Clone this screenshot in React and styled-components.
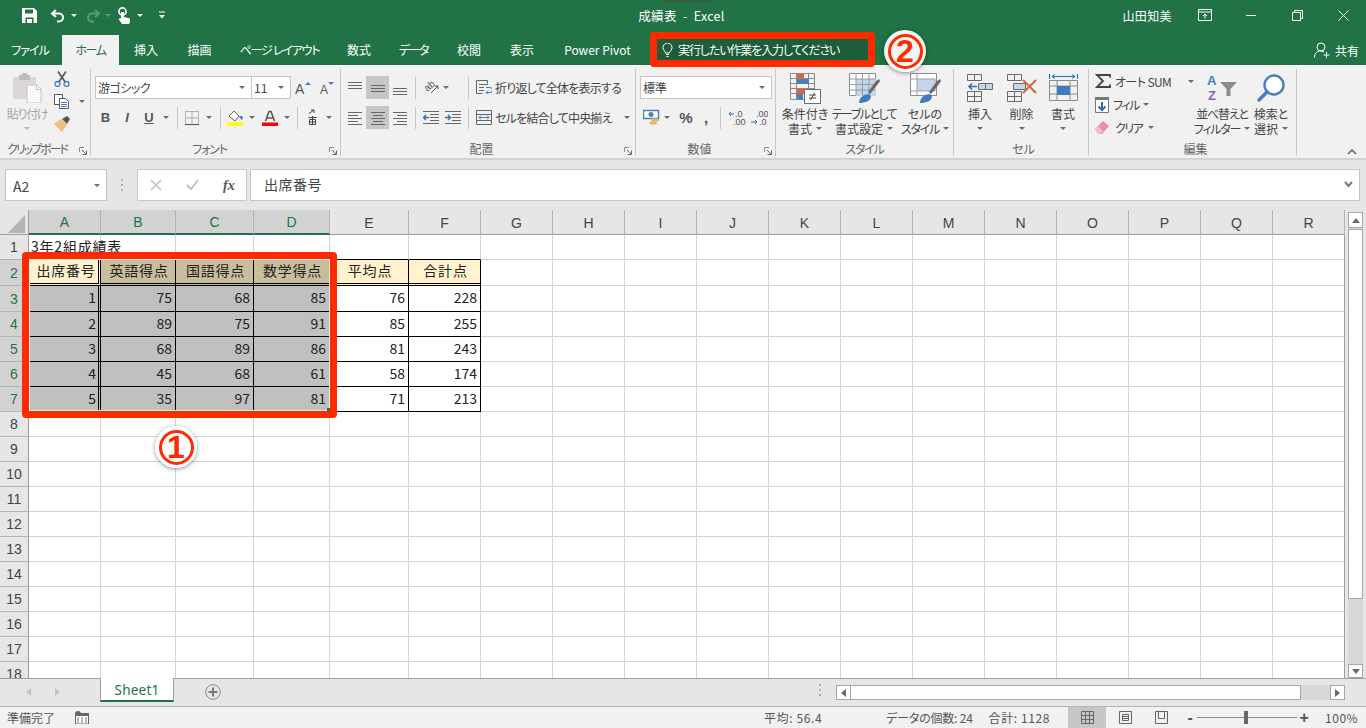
import React from "react";
import styled, { createGlobalStyle } from "styled-components";

const GREEN = "#217346";
const JP = `"Noto Sans CJK JP", "Noto Sans", sans-serif`;

const GlobalStyle = createGlobalStyle`
  html, body { margin: 0; padding: 0; overflow: hidden; background: #fff; }
  * { box-sizing: border-box; }
  body { font-family: ${JP}; font-size: 12px; font-feature-settings: "palt"; }
`;

const Window = styled.div`
  position: relative;
  width: 1366px;
  height: 728px;
  display: flex;
  flex-direction: column;
  overflow: hidden;
  background: #e6e6e6;
`;

/* kana in the original font runs much narrower than Noto */
const Kana = styled.span`
  letter-spacing: ${(p) => p.$ls ?? -1}px;
`;

/* ---------- title bar ---------- */
const TitleBar = styled.div`
  height: 35px;
  padding-bottom: 5px;
  display: grid;
  grid-template-columns: 1fr auto 1fr;
  align-items: center;
  background: ${GREEN};
  color: #fff;
`;
const Qat = styled.div`
  display: flex;
  align-items: center;
  padding-left: 19px;
`;
const QatCell = styled.span`
  display: flex;
  align-items: center;
  justify-content: center;
  width: ${(p) => p.$w}px;
  margin-left: ${(p) => p.$ml || 0}px;
  height: 24px;
`;
const DocTitle = styled.div`
  font-size: 12.5px;
  letter-spacing: 0.3px;
  white-space: pre;
  margin-left: -3px;
`;
const WinArea = styled.div`
  display: flex;
  align-items: center;
  justify-content: flex-end;
`;
const UserName = styled.span`
  font-size: 12px;
  letter-spacing: 0.4px;
  margin-right: 10px;
`;
const WinBtn = styled.span`
  display: flex;
  align-items: center;
  justify-content: center;
  width: 46px;
  height: 24px;
`;

/* ---------- tabs ---------- */
const TabRow = styled.div`
  height: 30px;
  display: flex;
  background: ${GREEN};
`;
const Tab = styled.div`
  width: ${(p) => p.$w}px;
  margin-left: ${(p) => p.$ml || 0}px;
  padding-bottom: 2px;
  display: flex;
  align-items: center;
  justify-content: center;
  font-size: 12px;
  color: ${(p) => (p.$active ? GREEN : "#fff")};
  background: ${(p) => (p.$active ? "#f1f1f1" : "transparent")};
  white-space: pre;
`;
const TellMe = styled.div`
  width: 211px;
  height: 21px;
  margin: 4px 0 0 10px;
  display: flex;
  align-items: center;
  gap: 5px;
  padding-left: 5px;
  background: #1d5e3a;
  color: #fff;
  font-size: 12px;
`;
const Share = styled.div`
  margin-left: auto;
  padding-right: 7px;
  display: flex;
  align-items: center;
  gap: 5px;
  color: #fff;
  font-size: 12px;
`;

/* ---------- ribbon ---------- */
const Ribbon = styled.div`
  position: relative;
  height: 95px;
  display: flex;
  align-items: flex-start;
  background: #f1f1f1;
  border-bottom: 2px solid #d2d2d2;
`;
const Group = styled.div`
  position: relative;
  width: ${(p) => p.$w}px;
  height: 87px;
  margin-top: 4px;
  padding-left: ${(p) => p.$pl || 0}px;
  border-right: 1px solid #c8c8c8;
  flex: none;
`;
const GroupBody = styled.div`
  height: 72px;
  display: flex;
`;
const Stack = styled.div`
  width: ${(p) => (p.$w ? `${p.$w}px` : "auto")};
  padding-top: ${(p) => p.$pt ?? 7}px;
  display: flex;
  flex-direction: column;
  gap: ${(p) => p.$gap ?? 7}px;
`;
const Row = styled.div`
  height: ${(p) => p.$h || 23}px;
  display: flex;
  align-items: center;
`;
const Cell = styled.span`
  flex: none;
  display: flex;
  align-items: center;
  justify-content: center;
  width: ${(p) => p.$w}px;
  height: 23px;
  background: ${(p) => (p.$active ? "#c6c6c6" : "transparent")};
`;
const VSep = styled.i`
  display: block;
  width: 1px;
  height: 22px;
  background: #c8c8c8;
`;
const Caret = styled.i`
  display: block;
  flex: none;
  width: 0;
  height: 0;
  border-left: 3px solid transparent;
  border-right: 3px solid transparent;
  border-top: 3px solid ${(p) => p.$c || "#6a6a6a"};
`;
const GroupLabel = styled.div`
  height: 15px;
  line-height: 15px;
  text-align: center;
  color: #666;
  font-size: 12px;
  padding-right: ${(p) => (p.$launch ? 16 : 0)}px;
`;
const Launcher = styled.span`
  position: absolute;
  right: 3px;
  bottom: 1px;
  display: flex;
`;
const Chevron = styled.span`
  position: absolute;
  right: 9px;
  bottom: 3px;
  display: flex;
`;
const Select = styled.div`
  width: ${(p) => p.$w}px;
  height: 23px;
  flex: none;
  display: flex;
  align-items: center;
  justify-content: space-between;
  padding: 0 6px 0 2px;
  background: #fff;
  border: 1px solid #c6c6c6;
  color: #444;
  font-size: 12px;
  margin-left: ${(p) => p.$ml || 0}px;
`;
const BigBtn = styled.div`
  width: ${(p) => p.$w}px;
  flex: none;
  display: flex;
  flex-direction: column;
  align-items: center;
  padding-top: 3px;
  color: ${(p) => (p.$off ? "#a6a6a6" : "#444")};
  font-size: 12px;
  line-height: 15px;
  white-space: pre;
`;
const BigIcon = styled.span`
  height: 32px;
  display: flex;
  align-items: center;
  justify-content: center;
  margin-bottom: 2px;
`;
const BigLine = styled.span`
  display: flex;
  align-items: center;
  gap: 4px;
  height: 15px;
`;
const SmallBtn = styled.div`
  display: flex;
  align-items: center;
  gap: ${(p) => p.$gap ?? 4}px;
  color: #444;
  font-size: 12px;
  white-space: pre;
`;
const Spacer = styled.i`
  display: block;
  flex: none;
  width: ${(p) => p.$w}px;
`;
const Filler = styled.i`
  display: block;
  flex: 1;
`;
const FmtLetter = styled.span`
  font-family: "Liberation Sans", sans-serif;
  font-size: 13px;
  font-weight: 700;
  font-style: ${(p) => (p.$i ? "italic" : "normal")};
  text-decoration: ${(p) => (p.$u ? "underline" : "none")};
  color: #555;
`;
const Percent = styled.span`
  font-family: "Liberation Sans", sans-serif;
  font-size: 15px;
  font-weight: 700;
  color: #555;
`;

/* ---------- formula bar ---------- */
const FormulaBar = styled.div`
  height: 50px;
  padding: 9px 6px 9px 5px;
  display: flex;
  align-items: stretch;
  background: #e6e6e6;
`;
const NameBox = styled.div`
  width: 102px;
  display: flex;
  align-items: center;
  justify-content: space-between;
  padding: 1px 6px 0 7px;
  background: #fff;
  border: 1px solid #c6c6c6;
  font-size: 14px;
  color: #444;
`;
const Grip = styled.span`
  width: 30px;
  display: flex;
  align-items: center;
  justify-content: center;
`;
const FxBox = styled.div`
  width: 110px;
  display: flex;
  align-items: center;
  padding-left: 12px;
  gap: 24px;
  background: #fff;
  border: 1px solid #c6c6c6;
`;
const FormulaInput = styled.div`
  flex: 1;
  margin-left: 3px;
  padding: 0 6px 2px 13px;
  display: flex;
  align-items: center;
  justify-content: space-between;
  background: #fff;
  border: 1px solid #c6c6c6;
  font-size: 14px;
  color: #444;
  letter-spacing: 0.5px;
`;

/* ---------- sheet ---------- */
const SheetArea = styled.div`
  height: 468px;
  display: flex;
  background: #fff;
`;
const GridClip = styled.div`
  width: 1345px;
  overflow: hidden;
`;
const Table = styled.table`
  width: 1345px;
  table-layout: fixed;
  border-collapse: separate;
  border-spacing: 0;
`;
const Tr = styled.tr`
  height: ${(p) => p.$h}px;
`;
const ColHead = styled.th`
  padding: 1px 0 0;
  font-weight: 400;
  font-size: 14px;
  font-family: "Liberation Sans", sans-serif;
  color: ${(p) => (p.$sel ? GREEN : "#444")};
  background: ${(p) => (p.$sel ? "#d2d2d2" : "#e6e6e6")};
  border-right: 1px solid #b4b4b4;
  border-bottom: ${(p) => (p.$sel ? `2px solid ${GREEN}` : "1px solid #9e9e9e")};
`;
const Corner = styled.th`
  padding: 0;
  background: #e6e6e6;
  border-right: 1px solid #9e9e9e;
  border-bottom: 1px solid #9e9e9e;
  vertical-align: bottom;
`;
const RowHead = styled.th`
  padding: 0;
  font-weight: 400;
  font-size: 14px;
  line-height: 16px;
  font-family: "Liberation Sans", sans-serif;
  color: ${(p) => (p.$sel ? GREEN : "#444")};
  background: ${(p) => (p.$sel ? "#d2d2d2" : "#e6e6e6")};
  border-right: 1px solid #9e9e9e;
  border-bottom: 1px solid #b4b4b4;
`;
const Td = styled.td`
  padding: 0 ${(p) => p.$pr ?? 3}px 3px ${(p) => p.$pl ?? 2}px;
  font-size: 14px;
  line-height: 18px;
  color: #222;
  white-space: nowrap;
  overflow: visible;
  text-align: ${(p) => p.$align || "right"};
  letter-spacing: ${(p) => (p.$head ? "0.8px" : "0")};
  background: ${(p) => p.$bg || "#fff"};
  border-right: ${(p) => p.$right || "1px solid #d4d4d4"};
  border-bottom: ${(p) => p.$bottom || "1px solid #d4d4d4"};
`;
const TitleText = styled.span`
  display: block;
  width: 0;
  text-align: left;
  letter-spacing: 0.8px;
`;
const VTrack = styled.div`
  flex: 1;
  background: #d8d8d8;
  display: flex;
  flex-direction: column;
`;
const ScrollBtn = styled.div`
  flex: none;
  width: ${(p) => p.$w || 15}px;
  height: ${(p) => p.$h || 15}px;
  display: flex;
  align-items: center;
  justify-content: center;
  background: #fff;
  border: 1px solid #a6a6a6;
`;
const VScrollWrap = styled.div`
  width: 21px;
  display: flex;
  flex-direction: column;
  background: #e6e6e6;
  padding: 2px 3px 0 3px;
`;
const VThumb = styled.div`
  height: 370px;
  margin-top: 1px;
  background: #fff;
  border: 1px solid #a6a6a6;
`;
const TriH = styled.i`
  display: block;
  width: 0;
  height: 0;
  border-top: 4px solid transparent;
  border-bottom: 4px solid transparent;
  ${(p) => (p.$dir === "left" ? "border-right" : "border-left")}: 5px solid ${(p) => p.$c || "#6a6a6a"};
`;
const TriV = styled.i`
  display: block;
  width: 0;
  height: 0;
  border-left: 4px solid transparent;
  border-right: 4px solid transparent;
  ${(p) => (p.$dir === "up" ? "border-bottom" : "border-top")}: 5px solid #6a6a6a;
`;

/* ---------- sheet tabs ---------- */
const TabBar = styled.div`
  height: 29px;
  display: flex;
  align-items: flex-start;
  background: #e6e6e6;
  border-top: 1px solid #9e9e9e;
  border-bottom: 1px solid #b4b4b4;
`;
const SheetNav = styled.div`
  width: 100px;
  height: 25px;
  display: flex;
  align-items: center;
  padding-left: 26px;
  gap: 24px;
`;
const SheetTab = styled.div`
  width: 74px;
  height: 24px;
  margin-top: -1px;
  padding-top: 2px;
  display: flex;
  align-items: center;
  justify-content: center;
  background: #fff;
  color: ${GREEN};
  font-size: 13.5px;
  letter-spacing: 0.2px;
  font-family: "Noto Sans", sans-serif;
  border-left: 1px solid #9e9e9e;
  border-right: 1px solid #9e9e9e;
  border-bottom: 2px solid ${GREEN};
`;
const AddSheet = styled.span`
  margin: 5px 0 0 31px;
  display: flex;
`;
const TabGrip = styled.span`
  margin: 5px 0 0 591px;
  width: 16px;
  display: flex;
  justify-content: center;
`;
const HScroll = styled.div`
  width: 509px;
  height: 15px;
  margin: 6px 0 0 8px;
  display: flex;
  background: #d8d8d8;
`;
const HThumb = styled.div`
  flex: none;
  width: 450px;
  background: #fff;
  border: 1px solid #a6a6a6;
  border-left: none;
`;

/* ---------- status bar ---------- */
const StatusBar = styled.div`
  height: 21px;
  display: flex;
  align-items: center;
  background: #f1f1f1;
  color: #555;
  font-size: 12px;
`;
const StatusText = styled.span`
  white-space: pre;
  letter-spacing: ${(p) => p.$ls || 0}px;
  margin-left: ${(p) => p.$ml}px;
`;
const StatusIcon = styled.span`
  display: flex;
  margin-left: ${(p) => p.$ml}px;
`;
const ViewBtn = styled.span`
  width: ${(p) => p.$w}px;
  height: 21px;
  display: flex;
  align-items: center;
  justify-content: center;
  background: ${(p) => (p.$active ? "#c6c6c6" : "transparent")};
`;
const ZoomTrack = styled.div`
  position: relative;
  width: 100px;
  height: 1px;
  margin: 0 1px;
  background: #8a8a8a;
`;
const ZoomThumb = styled.i`
  position: absolute;
  left: 47px;
  top: -6px;
  width: 4px;
  height: 13px;
  background: #666;
`;
const ZoomSign = styled.span`
  width: 12px;
  margin-left: ${(p) => p.$ml || 0}px;
  text-align: center;
  font-size: 16px;
  font-weight: 700;
  color: #555;
  font-family: "Liberation Sans", sans-serif;
`;

/* ---------- annotations over the screenshot ---------- */
const RedBox = styled.div`
  position: absolute;
  left: ${(p) => p.$x}px;
  top: ${(p) => p.$y}px;
  width: ${(p) => p.$w}px;
  height: ${(p) => p.$h}px;
  border: 7px solid #ff2a00;
  border-radius: 4px;
`;
const SelectionEdge = styled.i`
  position: absolute;
  inset: 0;
  border: 1px solid #e8efe9;
  &::after {
    content: "";
    position: absolute;
    right: -1px;
    bottom: -1px;
    width: 3px;
    height: 3px;
    background: ${GREEN};
  }
`;
const Badge = styled.div`
  position: absolute;
  left: ${(p) => p.$x}px;
  top: ${(p) => p.$y}px;
  width: 42px;
  height: 42px;
  display: flex;
  align-items: center;
  justify-content: center;
  border-radius: 50%;
  background: rgba(255, 255, 255, 0.94);
  box-shadow: 0 1px 4px rgba(0, 0, 0, 0.45);
`;
const BadgeRing = styled.span`
  width: 35px;
  height: 35px;
  display: flex;
  align-items: center;
  justify-content: center;
  border-radius: 50%;
  border: 3px solid #ff2a00;
  color: #ff2a00;
  font-family: "Liberation Sans", sans-serif;
  font-size: 32px;
  font-weight: 700;
  line-height: 1;
`;
const TopNotch = styled.i`
  position: absolute;
  left: 663px;
  top: 0;
  width: 47px;
  height: 2px;
  background: #3a5a48;
`;

/* ---------- icons ---------- */
const IcoSvg = styled.svg`
  display: block;
  flex: none;
`;
const Ico = ({ w = 16, h = 16, children }) => (
  <IcoSvg width={w} height={h} viewBox={`0 0 ${w} ${h}`} fill="none">
    {children}
  </IcoSvg>
);
const CornerSvg = styled.svg`
  display: block;
  margin: 0 3px 1px auto;
`;

const SaveIcon = () => (
  <Ico w={15} h={15}>
    <path d="M0 0h12l3 3v12H0z" fill="#fff" />
    <path d="M3 1.500h8v4H3z" fill={GREEN} />
    <path d="M3.500 9.500h8V15h-8z" fill={GREEN} />
    <path d="M5 11h5v4H5z" fill="#fff" />
  </Ico>
);
const UndoIcon = ({ c = "#fff", flip }) => (
  <Ico w={15} h={15}>
    <g transform={flip ? "translate(15 0) scale(-1 1)" : undefined} stroke={c} strokeWidth="2">
      <path d="M6 2 2 5.500 6 9" />
      <path d="M2.500 5.500H9a3.800 3.800 0 0 1 0 8H7" />
    </g>
  </Ico>
);
const TouchIcon = () => (
  <Ico w={15} h={17}>
    <circle cx="5.500" cy="4.500" r="3.600" stroke="#fff" strokeWidth="1.600" />
    <path d="M4 5h3v5l6 1.500V15l-1 2H5L1.500 12 4 11z" fill="#fff" />
  </Ico>
);
const CustomizeIcon = () => (
  <Ico w={8} h={8}>
    <path d="M1 1h6" stroke="#fff" />
    <path d="M1 4h6L4 7.500z" fill="#fff" />
  </Ico>
);
const RibbonModeIcon = () => (
  <Ico w={14} h={12}>
    <path d="M.5.5h13v11H.5zM.5 3h13" stroke="#fff" />
    <path d="M7 9.500V5M5 7l2-2 2 2" stroke="#fff" />
  </Ico>
);
const MinIcon = () => (
  <Ico w={10} h={10}>
    <path d="M0 5.500h10" stroke="#fff" />
  </Ico>
);
const RestoreIcon = () => (
  <Ico w={11} h={11}>
    <path d="M.5 2.500h8v8h-8zM2.500 2.500v-2h8v8h-2" stroke="#fff" />
  </Ico>
);
const CloseIcon = () => (
  <Ico w={11} h={11}>
    <path d="M.5.5l10 10M10.500.5l-10 10" stroke="#fff" />
  </Ico>
);
const BulbIcon = () => (
  <Ico w={11} h={14}>
    <path d="M3.500 10C3 7.500 1 7 1 4.600a4.500 4.500 0 0 1 9 0C10 7 8 7.500 7.500 10z" stroke="#fff" />
    <path d="M4 11.500h3M4.500 13.500h2" stroke="#fff" />
  </Ico>
);
const ShareIcon = () => (
  <Ico w={16} h={16}>
    <circle cx="7" cy="5" r="4" stroke="#fff" />
    <path d="M.5 15.500c0-4 2.500-6.500 6-6.500 1.500 0 2.500.5 3.500 1" stroke="#fff" />
    <path d="M9.500 13h6M12.500 10v6" stroke="#fff" />
  </Ico>
);

const PasteIcon = () => (
  <Ico w={30} h={30}>
    <path d="M1 4h23v22H1z" fill="#dbd7d7" />
    <path d="M7 2h11v5H7zM10 0h5v3h-5z" fill="#bfbcbc" />
    <path d="M15 12h10l4 4v14H15z" fill="#f8f8f8" stroke="#c4c4c4" />
    <path d="M24.500 12v4.500H29" stroke="#c4c4c4" />
  </Ico>
);
const ScissorsIcon = () => (
  <Ico w={16} h={16}>
    <path d="M4 .5l7.500 11M12 .5 4.500 11.500" stroke="#555" strokeWidth="1.600" />
    <circle cx="3.500" cy="13" r="2.500" stroke="#4a7ebb" strokeWidth="1.300" />
    <circle cx="12.500" cy="13" r="2.500" stroke="#4a7ebb" strokeWidth="1.300" />
  </Ico>
);
const CopyIcon = () => (
  <Ico w={16} h={15}>
    <path d="M.5.5h8v10h-8z" fill="#fff" stroke="#555" />
    <path d="M5.500 4.500h6l3 3v7h-9z" fill="#fff" stroke="#555" />
    <path d="M7 8.500h6M7 10.500h6M7 12.500h6" stroke="#4a7ebb" />
  </Ico>
);
const PainterIcon = () => (
  <Ico w={17} h={16}>
    <path d="M0 8l7-5 6 6-5 7z" fill="#efbf7f" />
    <path d="M8 3l5-3 3 3-3 5z" fill="#555" />
  </Ico>
);
const Launch = () => (
  <Launcher>
    <Ico w={8} h={8}>
      <path d="M.5 5V.5H5" stroke="#8a8a8a" />
      <path d="M3 3l4 4M7.500 3.500v4h-4" stroke="#666" />
    </Ico>
  </Launcher>
);
const GrowIcon = ({ up }) => (
  <Ico w={16} h={18}>
    <text x={up ? 0 : 2} y="15" fontFamily="Liberation Sans" fontSize={up ? 14 : 12} fill="#555">A</text>
    <path d={up ? "M10 6l3-3 3 3z" : "M10 3h6l-3 3z"} fill="#4a7ebb" />
  </Ico>
);
const BorderIcon = () => (
  <Ico w={14} h={14}>
    <path d="M.5.5h13v13H.5zM7 .5v13M.5 7h13" stroke="#777" strokeDasharray="1 1" />
    <path d="M0 13.500h14" stroke="#555" />
  </Ico>
);
const FillIcon = () => (
  <Ico w={17} h={16}>
    <path d="M2 6l5-5 5 5-4 5z" fill="#fff" stroke="#666" />
    <path d="M12 6h3l1 2-1 2-2-2z" fill="#4a7ebb" />
    <path d="M0 12.500h16V16H0z" fill="#ffff00" />
  </Ico>
);
const FontColorIcon = () => (
  <Ico w={16} h={16}>
    <path d="M3.500 11 7 1.500h2l3.500 9.500M5 8h6" stroke="#555" strokeWidth="1.500" />
    <path d="M0 12.500h16V16H0z" fill="#ff0000" />
  </Ico>
);
const RubyIcon = () => (
  <Ico w={9} h={17}>
    <path d="M1 4.500 6 1M6 1H3M6 1v3" stroke="#444" />
    <path d="M.5 8.500h8M1.500 10.500h6v5h-6zM4.500 7v9M1.500 13h6" stroke="#444" />
  </Ico>
);
const AlignV = ({ y }) => (
  <Ico w={14} h={14}>
    <path d={`M0 ${y}h14M0 ${y + 3}h14M0 ${y + 6}h14`} stroke="#666" />
  </Ico>
);
const AlignH = ({ x }) => (
  <Ico w={14} h={14}>
    <path d="M0 1.500h14M0 7.500h14M0 13.500h14" stroke="#666" />
    <path d={`M${x} 4.500h10M${x} 10.500h10`} stroke="#666" />
  </Ico>
);
const OrientIcon = () => (
  <Ico w={23} h={23}>
    <text x="5" y="14" fontFamily="Liberation Sans" fontSize="10" fill="#555" transform="rotate(-40 9 12)">ab</text>
    <path d="M11 17l7-7M18 10h-3M18 10v3" stroke="#555" />
  </Ico>
);
const IndentIcon = ({ out }) => (
  <Ico w={16} h={13}>
    <path d="M0 .5h16M7 3.500h9M7 6.500h9M7 9.500h9M0 12.500h16" stroke="#666" />
    <path d={out ? "M6 6.500H1M3 4 .5 6.500 3 9" : "M0 6.500h5M3 4l2.500 2.500L3 9"} stroke="#2b6fb5" strokeWidth="1.400" />
  </Ico>
);
const WrapIcon = () => (
  <Ico w={16} h={15}>
    <path d="M.5.5h11M.5 13.500h6M.5.500v13M11.500.500v3" stroke="#666" />
    <path d="M3 4.500h9M3 7.500h5M3 10.500h5" stroke="#666" />
    <path d="M10 7.500h4a1.500 1.500 0 0 1 0 5h-4M12 10.500l-2 2 2 2" stroke="#4a7ebb" />
  </Ico>
);
const MergeIcon = () => (
  <Ico w={16} h={15}>
    <path d="M.5.5h15v14H.5zM.5 4.500h15M.5 10.500h15" stroke="#666" />
    <path d="M3 7.500h10M5 5.500l-2 2 2 2M11 5.500l2 2-2 2" stroke="#4a7ebb" />
  </Ico>
);
const CurrencyIcon = () => (
  <Ico w={17} h={17}>
    <path d="M.5 1.500h15v8H.5z" fill="#fff" stroke="#4a7ebb" strokeWidth="1.500" />
    <circle cx="8" cy="5.500" r="2.500" fill="#4a7ebb" />
    <ellipse cx="12" cy="11" rx="4" ry="1.700" fill="#e8b56a" />
    <ellipse cx="10" cy="14" rx="4" ry="1.700" fill="#e8b56a" />
  </Ico>
);
const DecIcon = ({ inc }) => (
  <Ico w={18} h={18}>
    <text x={inc ? 7 : 6} y="8" fontFamily="Liberation Sans" fontSize="9" fill="#555">{inc ? ".0" : ".00"}</text>
    <text x={inc ? 5 : 9} y="16" fontFamily="Liberation Sans" fontSize="9" fill="#555">{inc ? ".00" : ".0"}</text>
    <path d={inc ? "M6 5H1M3 3 1 5l2 2" : "M1 13h6M5 11l2 2-2 2"} stroke="#2b6fb5" />
  </Ico>
);
const CondIcon = () => (
  <Ico w={31} h={31}>
    <path d="M.5.5h24v26H.5zM6.500.5v26M18.500.5v26M.5 5.500h24M.5 10.500h24M.5 15.500h24M.5 20.500h24" stroke="#8c8c8c" />
    <path d="M7 1h7v4.500H7zM7 16h7v5H7z" fill="#d9653f" />
    <path d="M7 6h12v5H7zM7 21h6v5.500H7z" fill="#4a7ebb" />
    <path d="M14.500 16.500h16v14h-16z" fill="#fff" stroke="#6a6a6a" />
    <path d="M19 22h7M19 25h7M24.500 20l-4 7" stroke="#444" />
  </Ico>
);
const TableIcon = () => (
  <Ico w={31} h={30}>
    <path d="M.5.5h26v22H.5z" fill="#fff" stroke="#8c8c8c" />
    <path d="M7 6h20v17H7z" fill="#c3d5ea" />
    <path d="M.5 6h26M.5 11.500h26M.5 17h26M7 .5v22M13.500.5v22M20 .5v22" stroke="#9c9c9c" />
    <path d="M19 19l8-11 3-2 1 2-2 3-8 10z" fill="#6a6a6a" />
    <path d="M10 30c0-5 4-9 10-9l2 2c0 5-6 7-12 7z" fill="#3e7cbe" />
  </Ico>
);
const CellStyleIcon = () => (
  <Ico w={31} h={30}>
    <path d="M.5.5h26v22H.5z" fill="#fff" stroke="#8c8c8c" />
    <path d="M7 6h18v12H7z" fill="#c3d5ea" stroke="#9c9c9c" />
    <path d="M.5 6H7M.5 18H7M7 .5V6M7 18v4" stroke="#9c9c9c" />
    <path d="M19 19l8-11 3-2 1 2-2 3-8 10z" fill="#6a6a6a" />
    <path d="M10 30c0-5 4-9 10-9l2 2c0 5-6 7-12 7z" fill="#3e7cbe" />
  </Ico>
);
const InsertCellIcon = () => (
  <Ico w={27} h={28}>
    <path d="M.5.5h14v6H.5zM7.500.5v6M.5 17.500h14v10H.5zM7.500 17.500v10M.5 22.500h14" stroke="#6a6a6a" />
    <path d="M11.500 9.500h14v6h-14zM18.500 9.500v6" fill="#c3d5ea" stroke="#6a6a6a" />
    <path d="M10 12.500H2M5 9.500l-3 3 3 3" stroke="#2b6fb5" strokeWidth="1.500" />
  </Ico>
);
const DeleteCellIcon = () => (
  <Ico w={30} h={28}>
    <path d="M.5.5h14v6H.5zM7.500.5v6M.5 17.500h14v10H.5zM7.500 17.500v10M.5 22.500h14" stroke="#6a6a6a" />
    <path d="M6.500 9.500h12v6h-12z" fill="#c3d5ea" stroke="#6a6a6a" />
    <path d="M16 6l13 13M29 6 16 19" stroke="#d9653f" strokeWidth="2" />
  </Ico>
);
const FormatCellIcon = () => (
  <Ico w={29} h={30}>
    <path d="M.5 1v5M28.500 1v5" stroke="#2b6fb5" />
    <path d="M3 3.500h23M6 1.500l-3 2 3 2M23 1.500l3 2-3 2" stroke="#2b6fb5" />
    <path d="M.5 7.500h28v20H.5zM8 7.500v20M21 7.500v20M.5 13h28M.5 21h28" stroke="#8c8c8c" />
    <path d="M8 13h13v9H8z" fill="#3e7cbe" />
  </Ico>
);
const SigmaIcon = () => (
  <Ico w={16} h={14}>
    <path d="M15 3.500V1H2l6 6-6 6h13v-2.500" stroke="#444" strokeWidth="1.800" />
  </Ico>
);
const FillDownIcon = () => (
  <Ico w={14} h={16}>
    <path d="M.5.5h13v15H.5z" fill="#fff" stroke="#777" />
    <path d="M0 0h14v3H0z" fill="#777" />
    <path d="M7 5v8M3.500 9.500 7 13l3.500-3.500" stroke="#2b6fb5" strokeWidth="2" />
  </Ico>
);
const EraserIcon = () => (
  <Ico w={14} h={13}>
    <path d="M0 8l8-8 6 5-7 8H3z" fill="#ed8f9e" />
    <path d="M0 8l3-3 5 5-3 3H3z" fill="#f4bcc4" />
  </Ico>
);
const SortIcon = () => (
  <Ico w={30} h={32}>
    <text x="0" y="13" fontFamily="Liberation Sans" fontWeight="700" fontSize="13" fill="#4a7ebb">A</text>
    <text x="1" y="28" fontFamily="Liberation Sans" fontWeight="700" fontSize="13" fill="#9060b0">Z</text>
    <path d="M13 10h17l-6.500 7v7h-4v-7z" fill="#8c8c8c" />
  </Ico>
);
const FindIcon = () => (
  <Ico w={28} h={28}>
    <circle cx="17" cy="11" r="9.500" stroke="#4a7ebb" strokeWidth="2.400" fill="#fff" />
    <path d="M10 18 2 26" stroke="#4a7ebb" strokeWidth="3.500" strokeLinecap="round" />
  </Ico>
);
const ChevUp = () => (
  <Ico w={10} h={6}>
    <path d="M1 5l4-4 4 4" stroke="#666" strokeWidth="1.600" />
  </Ico>
);
const GripDots = () => (
  <Ico w={3} h={13}>
    <path d="M0 0h2v2H0zM0 5h2v2H0zM0 10h2v2H0z" fill="#b0b0b0" />
  </Ico>
);
const CancelIcon = () => (
  <Ico w={12} h={12}>
    <path d="M1 1l10 10M11 1 1 11" stroke="#c2c2c2" strokeWidth="1.600" />
  </Ico>
);
const EnterIcon = () => (
  <Ico w={13} h={12}>
    <path d="M1 6l4 4 7-9" stroke="#c2c2c2" strokeWidth="2" />
  </Ico>
);
const FxIcon = () => (
  <Ico w={14} h={17}>
    <text x="0" y="13" fontFamily="Liberation Serif" fontStyle="italic" fontWeight="700" fontSize="14" fill="#555">fx</text>
  </Ico>
);
const ExpandIcon = () => (
  <Ico w={9} h={7}>
    <path d="M1 1l3.500 4L8 1" stroke="#777" strokeWidth="2" />
  </Ico>
);
const CornerTri = () => (
  <CornerSvg width="17" height="18" viewBox="0 0 17 18">
    <path d="M17 0v18H0z" fill="#b4b4b4" />
  </CornerSvg>
);
const AddIcon = () => (
  <Ico w={16} h={16}>
    <circle cx="8" cy="8" r="7.300" stroke="#8a8a8a" />
    <path d="M3.500 8h9M8 3.500v9" stroke="#777" strokeWidth="2" />
  </Ico>
);
const MacroIcon = () => (
  <Ico w={14} h={13}>
    <circle cx="3" cy="3" r="3" fill="#666" />
    <path d="M.5 4.500h13V13H.5z" fill="#fff" stroke="#666" />
    <path d="M5 2h9v3H5z" fill="#666" />
    <path d="M2 7h2M6 7h2M10 7h2M2 9h2M6 9h2M10 9h2M2 11h2M6 11h2M10 11h2" stroke="#777" />
  </Ico>
);
const NormalViewIcon = () => (
  <Ico w={13} h={13}>
    <path d="M.5.5h12v12H.5zM.5 4.500h12M.5 8.500h12M4.500.5v12M8.500.5v12" stroke="#666" />
  </Ico>
);
const PageViewIcon = () => (
  <Ico w={13} h={13}>
    <path d="M.5.5h12v12H.5z" stroke="#666" />
    <path d="M3.500 3.500h6v6h-6zM3.500 5.500h6M3.500 7.500h6" stroke="#666" />
  </Ico>
);
const BreakViewIcon = () => (
  <Ico w={13} h={13}>
    <path d="M.5.5h12v12H.5z" stroke="#666" />
    <path d="M3.500.5v7h6v-7" stroke="#666" />
  </Ico>
);

/* ---------- data ---------- */
const colNames = "ABCDEFGHIJKLMNOPQR".split("");
const colWidths = [72, 75, 78, 76, 79, 72, ...Array(12).fill(72)];
const selectedCols = ["A", "B", "C", "D"];
const rowHeights = { 1: 25, 2: 26, 3: 26 };
const rowCount = 18;
const scores = {
  2: ["出席番号", "英語得点", "国語得点", "数学得点", "平均点", "合計点"],
  3: [1, 75, 68, 85, 76, 228],
  4: [2, 89, 75, 91, 85, 255],
  5: [3, 68, 89, 86, 81, 243],
  6: [4, 45, 68, 61, 58, 174],
  7: [5, 35, 97, 81, 71, 213],
};

const cellProps = (row, col) => {
  const p = {};
  const inTable = row >= 2 && row <= 7 && col <= 5;
  if (col === 17) p.$right = "1px solid #9e9e9e";
  if (inTable) {
    p.$right = col === 0 ? "3px double #000" : "1px solid #000";
    p.$bottom = row === 2 ? "3px double #000" : "1px solid #000";
    if (col === 0) p.$pr = 2;
  }
  if (row === 1 && col <= 5) p.$bottom = "1px solid #000";
  if (row === 2 && col <= 5) {
    p.$bg = col >= 1 && col <= 3 ? "#c8bd9c" : "#fff2cc";
    p.$align = "center";
    p.$head = true;
    p.$pr = 0;
    if (col === 0) p.$pl = 5;
  }
  if (row >= 3 && row <= 7 && col <= 3) p.$bg = "#c0c0c0";
  return p;
};

const Sheet = () => (
  <GridClip>
    <Table>
      <colgroup>
        <col style={{ width: 29 }} />
        {colWidths.map((w, i) => (
          <col key={i} style={{ width: w }} />
        ))}
      </colgroup>
      <thead>
        <Tr $h={25}>
          <Corner>
            <CornerTri />
          </Corner>
          {colNames.map((c) => (
            <ColHead key={c} $sel={selectedCols.includes(c)}>
              {c}
            </ColHead>
          ))}
        </Tr>
      </thead>
      <tbody>
        {Array.from({ length: rowCount }, (_, i) => i + 1).map((r) => (
          <Tr key={r} $h={rowHeights[r] || 25}>
            <RowHead $sel={r >= 2 && r <= 7}>{r}</RowHead>
            {colNames.map((c, ci) => (
              <Td key={c} {...cellProps(r, ci)}>
                {r === 1 && ci === 0 ? <TitleText>3年2組成績表</TitleText> : scores[r] ? scores[r][ci] : null}
              </Td>
            ))}
          </Tr>
        ))}
      </tbody>
    </Table>
  </GridClip>
);

const Big = ({ w, icon, lines }) => (
  <BigBtn $w={w}>
    <BigIcon>{icon}</BigIcon>
    {lines.map((l, i) => (
      <BigLine key={i}>
        {l}
        {i === lines.length - 1 ? <Caret /> : null}
      </BigLine>
    ))}
  </BigBtn>
);

/* label on one line, dropdown caret on its own line below */
const DropBtn = ({ icon, label, w, off }) => (
  <BigBtn $w={w} $off={off}>
    <BigIcon>{icon}</BigIcon>
    {label}
    <BigLine><Caret $c={off ? "#b8b8b8" : undefined} /></BigLine>
  </BigBtn>
);

const App = () => (
  <Window>
    <GlobalStyle />
    <TitleBar>
      <Qat>
        <QatCell $w={20}><SaveIcon /></QatCell>
        <QatCell $w={28} $ml={4}><UndoIcon /></QatCell>
        <QatCell $w={6}><Caret $c="#fff" /></QatCell>
        <QatCell $w={20} $ml={6}><UndoIcon c="#5f9a79" flip /></QatCell>
        <QatCell $w={10}><Caret $c="#5f9a79" /></QatCell>
        <QatCell $w={22}><TouchIcon /></QatCell>
        <QatCell $w={10}><Caret $c="#fff" /></QatCell>
        <QatCell $w={33}><CustomizeIcon /></QatCell>
      </Qat>
      <DocTitle>成績表  -  Excel</DocTitle>
      <WinArea>
        <UserName>山田知美</UserName>
        <WinBtn><RibbonModeIcon /></WinBtn>
        <WinBtn><MinIcon /></WinBtn>
        <WinBtn><RestoreIcon /></WinBtn>
        <WinBtn><CloseIcon /></WinBtn>
      </WinArea>
    </TitleBar>

    <TabRow>
      <Tab $w={60}><Kana>ファイル</Kana></Tab>
      <Tab $w={57} $ml={2} $active><Kana $ls={-1.5}>ホーム</Kana></Tab>
      <Tab $w={54}>挿入</Tab>
      <Tab $w={53}>描画</Tab>
      <Tab $w={107}><Kana $ls={-1.2}>ページ レイアウト</Kana></Tab>
      <Tab $w={52}>数式</Tab>
      <Tab $w={57}><Kana $ls={-1.5}>データ</Kana></Tab>
      <Tab $w={54}>校閲</Tab>
      <Tab $w={52}>表示</Tab>
      <Tab $w={99}>Power Pivot</Tab>
      <TellMe>
        <BulbIcon />
        <Kana $ls={-1.1}>実行したい作業を入力してください</Kana>
      </TellMe>
      <Share>
        <ShareIcon />
        共有
      </Share>
    </TabRow>

    <Ribbon>
      <Group $w={91}>
        <GroupBody>
          <DropBtn w={54} off icon={<PasteIcon />} label={<Kana $ls={-1.3}>貼り付け</Kana>} />
          <Stack $pt={0} $gap={0}>
            <Row $h={20}><ScissorsIcon /></Row>
            <Row $h={24}>
              <SmallBtn $gap={9}><CopyIcon /><Caret /></SmallBtn>
            </Row>
            <Row $h={22}><PainterIcon /></Row>
          </Stack>
        </GroupBody>
        <GroupLabel $launch><Kana $ls={-2}>クリップボード</Kana></GroupLabel>
        <Launch />
      </Group>

      <Group $w={250} $pl={4}>
        <GroupBody>
          <Stack>
            <Row>
              <Select $w={157}><Kana $ls={-0.5}>游ゴシック</Kana><Caret /></Select>
              <Select $w={40} $ml={-1}>11<Caret /></Select>
              <Cell $w={24}><GrowIcon up /></Cell>
              <Cell $w={22}><GrowIcon /></Cell>
            </Row>
            <Row>
              <Cell $w={21}><FmtLetter>B</FmtLetter></Cell>
              <Cell $w={22}><FmtLetter $i>I</FmtLetter></Cell>
              <Cell $w={22}><FmtLetter $u>U</FmtLetter></Cell>
              <Cell $w={12}><Caret /></Cell>
              <Cell $w={11}><VSep /></Cell>
              <Cell $w={18}><BorderIcon /></Cell>
              <Cell $w={16}><Caret /></Cell>
              <Cell $w={6}><VSep /></Cell>
              <Cell $w={24}><FillIcon /></Cell>
              <Cell $w={10}><Caret /></Cell>
              <Cell $w={26}><FontColorIcon /></Cell>
              <Cell $w={8}><Caret /></Cell>
              <Cell $w={12}><VSep /></Cell>
              <Cell $w={18}><RubyIcon /></Cell>
              <Cell $w={16}><Caret /></Cell>
            </Row>
          </Stack>
        </GroupBody>
        <GroupLabel $launch><Kana $ls={-1.2}>フォント</Kana></GroupLabel>
        <Launch />
      </Group>

      <Group $w={295} $pl={3}>
        <GroupBody>
          <Stack>
            <Row>
              <Cell $w={22}><AlignV y={1.5} /></Cell>
              <Cell $w={23} $active><AlignV y={4.5} /></Cell>
              <Cell $w={22}><AlignV y={7.5} /></Cell>
              <Cell $w={8}><VSep /></Cell>
              <Cell $w={24}><OrientIcon /></Cell>
              <Cell $w={6}><Caret /></Cell>
              <Spacer $w={13} />
              <Cell $w={12}><VSep /></Cell>
              <Spacer $w={2} />
              <SmallBtn $gap={3}><WrapIcon /><Kana $ls={-0.8}>折り返して全体を表示する</Kana></SmallBtn>
            </Row>
            <Row>
              <Cell $w={22}><AlignH x={0} /></Cell>
              <Cell $w={23} $active><AlignH x={2} /></Cell>
              <Cell $w={22}><AlignH x={4} /></Cell>
              <Cell $w={8}><VSep /></Cell>
              <Spacer $w={1} />
              <Cell $w={22}><IndentIcon out /></Cell>
              <Cell $w={22}><IndentIcon /></Cell>
              <Cell $w={8}><VSep /></Cell>
              <Spacer $w={4} />
              <SmallBtn $gap={3}><MergeIcon /><Kana $ls={-0.8}>セルを結合して中央揃え</Kana><Spacer $w={6} /><Caret /></SmallBtn>
            </Row>
          </Stack>
        </GroupBody>
        <GroupLabel $launch>配置</GroupLabel>
        <Launch />
      </Group>

      <Group $w={140} $pl={4}>
        <GroupBody>
          <Stack>
            <Row><Select $w={132}>標準<Caret /></Select></Row>
            <Row>
              <Cell $w={22}><CurrencyIcon /></Cell>
              <Cell $w={10}><Caret /></Cell>
              <Cell $w={28}><Percent>%</Percent></Cell>
              <Cell $w={12}><Percent>,</Percent></Cell>
              <Cell $w={16}><VSep /></Cell>
              <Cell $w={18}><DecIcon inc /></Cell>
              <Spacer $w={4} />
              <Cell $w={18}><DecIcon /></Cell>
            </Row>
          </Stack>
        </GroupBody>
        <GroupLabel $launch>数値</GroupLabel>
        <Launch />
      </Group>

      <Group $w={178}>
        <GroupBody>
          <Big w={58} icon={<CondIcon />} lines={["条件付き", "書式"]} />
          <Big w={60} icon={<TableIcon />} lines={[<Kana key="t" $ls={-1.5}>テーブルとして</Kana>, "書式設定"]} />
          <Spacer $w={3} />
          <Big w={56} icon={<CellStyleIcon />} lines={["セルの", <Kana key="s" $ls={-1.2}>スタイル</Kana>]} />
        </GroupBody>
        <GroupLabel><Kana $ls={-1.2}>スタイル</Kana></GroupLabel>
      </Group>

      <Group $w={135} $pl={5}>
        <GroupBody>
          <DropBtn w={42} icon={<InsertCellIcon />} label="挿入" />
          <DropBtn w={41} icon={<DeleteCellIcon />} label="削除" />
          <DropBtn w={42} icon={<FormatCellIcon />} label="書式" />
        </GroupBody>
        <GroupLabel>セル</GroupLabel>
      </Group>

      <Group $w={208} $pl={6}>
        <GroupBody>
          <Stack $w={99} $pt={0} $gap={0}>
            <Row $h={24}>
              <SmallBtn $gap={4}><SigmaIcon /><Kana $ls={-0.6}>オート SUM</Kana><Spacer $w={9} /><Caret /></SmallBtn>
            </Row>
            <Row $h={23}>
              <SmallBtn $gap={4}><FillDownIcon /><Kana $ls={-1.5}>フィル</Kana><Caret /></SmallBtn>
            </Row>
            <Row $h={22}>
              <SmallBtn $gap={6}><EraserIcon /><Kana $ls={-1.5}>クリア</Kana><Caret /></SmallBtn>
            </Row>
          </Stack>
          <Big w={56} icon={<SortIcon />} lines={[<Kana key="a" $ls={-1.2}>並べ替えと</Kana>, <Kana key="b" $ls={-1.2}>フィルター</Kana>]} />
          <Big w={42} icon={<FindIcon />} lines={["検索と", "選択"]} />
        </GroupBody>
        <GroupLabel>編集</GroupLabel>
      </Group>

      <Chevron><ChevUp /></Chevron>
    </Ribbon>

    <FormulaBar>
      <NameBox>A2<Caret /></NameBox>
      <Grip><GripDots /></Grip>
      <FxBox>
        <CancelIcon />
        <EnterIcon />
        <FxIcon />
      </FxBox>
      <FormulaInput>出席番号<ExpandIcon /></FormulaInput>
    </FormulaBar>

    <SheetArea>
      <Sheet />
      <VScrollWrap>
        <ScrollBtn $h={16}><TriV $dir="up" /></ScrollBtn>
        <VTrack>
          <VThumb />
          <Filler />
          <ScrollBtn $h={14}><TriV $dir="down" /></ScrollBtn>
        </VTrack>
      </VScrollWrap>
    </SheetArea>

    <TabBar>
      <SheetNav>
        <TriH $dir="left" $c="#c2c2c2" />
        <TriH $c="#c2c2c2" />
      </SheetNav>
      <SheetTab>Sheet1</SheetTab>
      <AddSheet><AddIcon /></AddSheet>
      <TabGrip><GripDots /></TabGrip>
      <HScroll>
        <ScrollBtn><TriH $dir="left" /></ScrollBtn>
        <HThumb />
        <Filler />
        <ScrollBtn><TriH /></ScrollBtn>
      </HScroll>
    </TabBar>

    <StatusBar>
      <StatusText $ml={7}>準備完了</StatusText>
      <StatusIcon $ml={20}><MacroIcon /></StatusIcon>
      <StatusText $ml={675} $ls={0.6}>平均: 56.4</StatusText>
      <StatusText $ml={64} $ls={-0.2}>データの個数: 24</StatusText>
      <StatusText $ml={16} $ls={0.6}>合計: 1128</StatusText>
      <StatusIcon $ml={18}>
        <ViewBtn $w={38} $active><NormalViewIcon /></ViewBtn>
        <ViewBtn $w={38}><PageViewIcon /></ViewBtn>
        <ViewBtn $w={34}><BreakViewIcon /></ViewBtn>
      </StatusIcon>
      <ZoomSign $ml={6}>-</ZoomSign>
      <ZoomTrack><ZoomThumb /></ZoomTrack>
      <ZoomSign>+</ZoomSign>
      <StatusText $ml={15} $ls={0.5}>100%</StatusText>
    </StatusBar>

    <TopNotch />
    <RedBox $x={650} $y={32} $w={225} $h={35} />
    <RedBox $x={22} $y={252} $w={315} $h={166}>
      <SelectionEdge />
    </RedBox>
    <Badge $x={155} $y={426}>
      <BadgeRing>1</BadgeRing>
    </Badge>
    <Badge $x={884} $y={30}>
      <BadgeRing>2</BadgeRing>
    </Badge>
  </Window>
);

export default App;
